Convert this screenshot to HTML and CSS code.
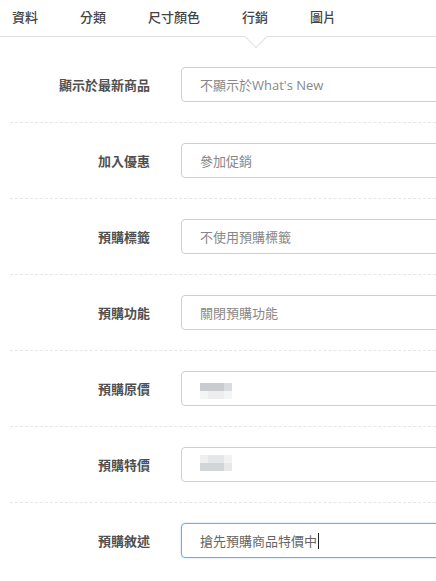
FILE: index.html
```html
<!DOCTYPE html>
<html lang="zh-Hant">
<head>
<meta charset="utf-8">
<link rel="stylesheet" href="styles.css">
</head>
<body>
<div class="page">
  <nav class="tabs">
    <a class="tab">資料</a>
    <a class="tab">分類</a>
    <a class="tab">尺寸顏色</a>
    <a class="tab active">行銷</a>
    <a class="tab">圖片</a>
  </nav>
  <div class="form">
    <div class="row first">
      <div class="label">顯示於最新商品</div>
      <div class="field">不顯示於What's New</div>
    </div>
    <div class="row">
      <div class="label">加入優惠</div>
      <div class="field">參加促銷</div>
    </div>
    <div class="row">
      <div class="label">預購標籤</div>
      <div class="field">不使用預購標籤</div>
    </div>
    <div class="row">
      <div class="label">預購功能</div>
      <div class="field">關閉預購功能</div>
    </div>
    <div class="row">
      <div class="label">預購原價</div>
      <div class="field"><span class="blur blur-a"><i></i><i></i><i></i><i></i><i></i><i></i><i></i><i></i></span></div>
    </div>
    <div class="row">
      <div class="label">預購特價</div>
      <div class="field"><span class="blur blur-b"><i></i><i></i><i></i><i></i><i></i><i></i><i></i><i></i></span></div>
    </div>
    <div class="row">
      <div class="label">預購敘述</div>
      <div class="field focus">搶先預購商品特價中<span class="caret"></span></div>
    </div>
  </div>
</div>
</body>
</html>
```
FILE: styles.css
```css
html, body {
  margin: 0;
  padding: 0;
  background: #fff;
}
body {
  font-family: "Open Sans", "Noto Sans CJK TC", sans-serif;
  font-size: 13px;
  color: #444;
  overflow: hidden;
}
.page {
  width: 436px;
  overflow: hidden;
}
.tabs {
  position: relative;
  display: flex;
  gap: 42px;
  padding-left: 12px;
  height: 36px;
  border-bottom: 1px solid #e0e0e0;
}
.tab {
  position: relative;
  display: block;
  padding-top: 8px;
  line-height: 18px;
  font-weight: 500;
  color: #444;
  text-decoration: none;
}
.tab.active::after {
  content: "";
  position: absolute;
  left: 50%;
  top: 29px;
  width: 15px;
  height: 15px;
  margin-left: -7px;
  background: #fff;
  border-right: 1px solid #e0e0e0;
  border-bottom: 1px solid #e0e0e0;
  transform: rotate(45deg);
}
.form {
  padding-left: 10px;
}
.row {
  display: flex;
  align-items: center;
  padding: 20px 0 20px;
  border-top: 1px dashed #e6e6e6;
}
.row.first {
  border-top: none;
  padding-top: 30px;
}
.label {
  width: 140px;
  flex: none;
  text-align: right;
  font-weight: 700;
  color: #4f4f4f;
}
.field {
  flex: none;
  margin-left: 31px;
  width: 300px;
  height: 35px;
  box-sizing: border-box;
  border: 1px solid #cfcfcf;
  border-radius: 4px;
  padding: 0 0 0 18px;
  display: flex;
  align-items: center;
  color: #888;
}
.field.focus {
  border-color: #66afe9;
  box-shadow: 0 0 2px rgba(102, 175, 233, 0.5);
  color: #666;
}
.caret {
  display: inline-block;
  width: 1px;
  height: 16px;
  background: #222;
  margin-left: 1px;
}
.blur {
  display: grid;
  grid-template-columns: repeat(4, 8px);
  grid-template-rows: repeat(2, 8px);
}
.blur-a {
  margin-top: 4px;
}
.blur-b {
  margin-top: -3px;
}
.blur-a i:nth-child(1), .blur-a i:nth-child(2), .blur-a i:nth-child(3) { background: #c8ccd0; }
.blur-a i:nth-child(4) { background: #d9dcde; }
.blur-a i:nth-child(5) { background: #f4f5f5; }
.blur-a i:nth-child(6), .blur-a i:nth-child(7) { background: #eceeef; }
.blur-a i:nth-child(8) { background: #f3f4f4; }
.blur-b i:nth-child(1) { background: #eef0f0; }
.blur-b i:nth-child(2), .blur-b i:nth-child(3) { background: #e4e6e7; }
.blur-b i:nth-child(4) { background: #f1f2f2; }
.blur-b i:nth-child(5), .blur-b i:nth-child(6), .blur-b i:nth-child(7) { background: #d3d6d8; }
.blur-b i:nth-child(8) { background: #e6e8e9; }
```
